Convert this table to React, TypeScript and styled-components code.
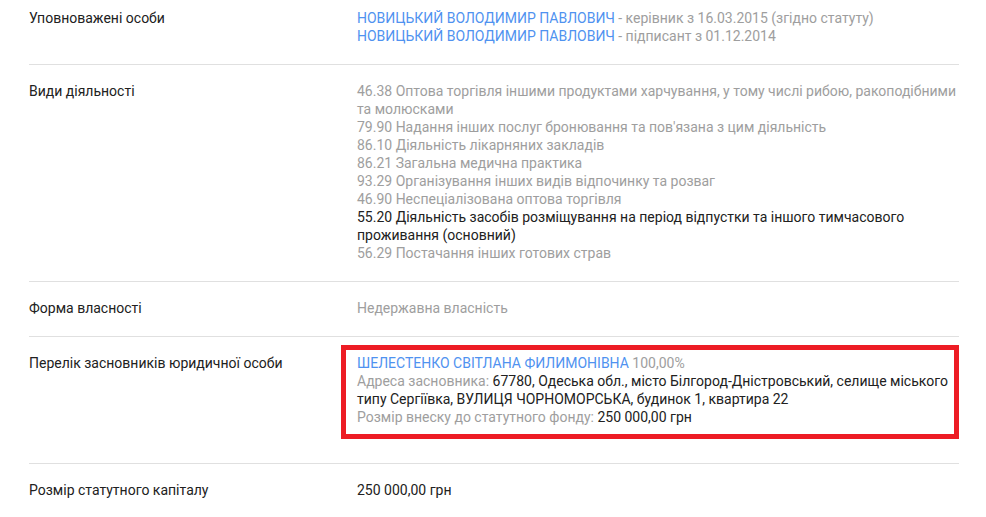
import React from 'react';
import styled, { createGlobalStyle } from 'styled-components';

const GlobalStyle = createGlobalStyle`
  html, body {
    margin: 0;
    padding: 0;
    background: #ffffff;
  }
  body {
    font-family: Roboto, "Liberation Sans", Arial, sans-serif;
    font-size: 14px;
    line-height: 18px;
    color: #212121;
  }
`;

const Table = styled.div`
  width: 930px;
  margin-left: 29px;
`;

const Row = styled.div<{ $first?: boolean; $last?: boolean }>`
  display: grid;
  grid-template-columns: 328px 1fr;
  padding: ${p => (p.$first ? '9px' : '17px')} 0 19px;
  border-bottom: ${p => (p.$last ? 'none' : '1px solid #e0e0e0')};
`;

const Label = styled.div`
  color: #212121;
`;

const Value = styled.div`
  color: #9e9e9e;
`;

const Line = styled.div<{ $dark?: boolean }>`
  color: ${p => (p.$dark ? '#212121' : '#9e9e9e')};
`;

const Link = styled.a`
  color: #4f92f0;
  text-decoration: none;
`;

const Dark = styled.span`
  color: #212121;
`;

const Highlight = styled.div`
  position: relative;
  margin-bottom: 18px;

  &::before {
    content: '';
    position: absolute;
    top: -9px;
    left: -16px;
    right: 0;
    bottom: -13px;
    border: 5px solid #ed1c24;
    pointer-events: none;
  }
`;

const activities: { text: string; main?: boolean }[] = [
  { text: '46.38 Оптова торгівля іншими продуктами харчування, у тому числі рибою, ракоподібними та молюсками' },
  { text: "79.90 Надання інших послуг бронювання та пов'язана з цим діяльність" },
  { text: '86.10 Діяльність лікарняних закладів' },
  { text: '86.21 Загальна медична практика' },
  { text: '93.29 Організування інших видів відпочинку та розваг' },
  { text: '46.90 Неспеціалізована оптова торгівля' },
  { text: '55.20 Діяльність засобів розміщування на період відпустки та іншого тимчасового проживання (основний)', main: true },
  { text: '56.29 Постачання інших готових страв' },
];

const App: React.FC = () => {
  return (
    <>
      <GlobalStyle />
      <Table>
        <Row $first>
          <Label>Уповноважені особи</Label>
          <Value>
            <Line>
              <Link href="#">НОВИЦЬКИЙ ВОЛОДИМИР ПАВЛОВИЧ</Link> - керівник з 16.03.2015 (згідно статуту)
            </Line>
            <Line>
              <Link href="#">НОВИЦЬКИЙ ВОЛОДИМИР ПАВЛОВИЧ</Link> - підписант з 01.12.2014
            </Line>
          </Value>
        </Row>

        <Row>
          <Label>Види діяльності</Label>
          <Value>
            {activities.map(a => (
              <Line key={a.text} $dark={a.main}>
                {a.text}
              </Line>
            ))}
          </Value>
        </Row>

        <Row>
          <Label>Форма власності</Label>
          <Value>Недержавна власність</Value>
        </Row>

        <Row>
          <Label>Перелік засновників юридичної особи</Label>
          <Value>
            <Highlight>
              <Line>
                <Link href="#">ШЕЛЕСТЕНКО СВІТЛАНА ФИЛИМОНІВНА</Link> 100,00%
              </Line>
              <Line>
                Адреса засновника:{' '}
                <Dark>
                  67780, Одеська обл., місто Білгород-Дністровський, селище міського типу Сергіївка, ВУЛИЦЯ
                  ЧОРНОМОРСЬКА, будинок 1, квартира 22
                </Dark>
              </Line>
              <Line>
                Розмір внеску до статутного фонду: <Dark>250 000,00 грн</Dark>
              </Line>
            </Highlight>
          </Value>
        </Row>

        <Row $last>
          <Label>Розмір статутного капіталу</Label>
          <Value>
            <Dark>250 000,00 грн</Dark>
          </Value>
        </Row>
      </Table>
    </>
  );
};

export default App;
